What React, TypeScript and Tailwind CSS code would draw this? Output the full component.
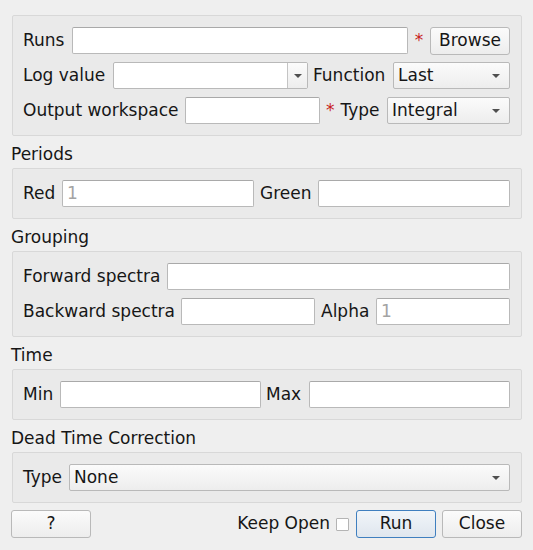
import { ReactNode } from 'react';

function Arrow() {
  return (
    <svg width="8" height="4" viewBox="0 0 8 4" className="shrink-0">
      <path d="M0 0h8L4 4z" fill="#4f4f4f" />
    </svg>
  );
}

function Star({ className = '' }: { className?: string }) {
  return <span className={`text-[#c81e1e] ${className}`}>*</span>;
}

function Label({ text, w, pl = 'pl-[1px]' }: { text: string; w: string; pl?: string }) {
  return <span className={`${w} ${pl} shrink-0 whitespace-nowrap`}>{text}</span>;
}

function Field({ w, placeholder }: { w: string; placeholder?: string }) {
  return (
    <div className={`${w} h-[27px] shrink-0 rounded-[2px] border border-[#b9b9b9] border-t-[#a9a9a9] bg-white px-[4px] leading-[25px] text-[#a3a3a3]`}>
      {placeholder}
    </div>
  );
}

function Combo({ w, value }: { w: string; value: string }) {
  return (
    <div className={`${w} flex h-[27px] shrink-0 items-center justify-between rounded-[2px] border border-[#b9b9b9] bg-linear-to-b from-[#fbfbfb] to-[#ededed] pl-[4px] pr-[9px]`}>
      <span>{value}</span>
      <Arrow />
    </div>
  );
}

function EditCombo({ w }: { w: string }) {
  return (
    <div className={`${w} flex h-[27px] shrink-0 overflow-hidden rounded-[2px] border border-[#b9b9b9] bg-white`}>
      <div className="flex-1" />
      <div className="flex w-[20px] items-center justify-center border-l border-[#c4c4c4] bg-linear-to-b from-[#fbfbfb] to-[#ededed]">
        <Arrow />
      </div>
    </div>
  );
}

function Button({ text, focus = false }: { text: string; focus?: boolean }) {
  const look = focus
    ? 'border-[#3f7fbf] from-[#f1f5f9] to-[#dfe6ee]'
    : 'border-[#b9b9b9] from-[#fbfbfb] to-[#ededed]';
  return (
    <div className={`flex h-[28px] w-[80px] shrink-0 items-center justify-center rounded-[3px] border bg-linear-to-b ${look}`}>
      {text}
    </div>
  );
}

function Box({ children }: { children: ReactNode }) {
  return (
    <div className="ml-[1px] flex flex-col gap-[8px] rounded-[2px] border border-[#d8d8d8] bg-[#eaeaea] py-[11px] pl-[9px] pr-[11px]">
      {children}
    </div>
  );
}

function Row({ children }: { children: ReactNode }) {
  return <div className="flex h-[27px] items-center">{children}</div>;
}

function Title({ text }: { text: string }) {
  return <div className="h-[32px] pt-[8px] leading-[20px]">{text}</div>;
}

export default function App() {
  return (
    <div className="flex h-[550px] w-[533px] flex-col bg-[#efefef] px-[11px] pt-[15px] font-['DejaVu_Sans',sans-serif] text-[17px] text-[#161616]">
      <Box>
        <Row>
          <Label text="Runs" w="w-[50px]" />
          <Field w="w-[336px]" />
          <div className="flex w-[22px] shrink-0 justify-center">
            <Star />
          </div>
          <Button text="Browse" />
        </Row>
        <Row>
          <Label text="Log value" w="w-[91px]" />
          <EditCombo w="w-[195px]" />
          <Label text="Function" w="w-[85px]" pl="pl-[5px]" />
          <Combo w="w-[117px]" value="Last" />
        </Row>
        <Row>
          <Label text="Output workspace" w="w-[163px]" />
          <Field w="w-[135px]" />
          <div className="flex w-[67px] shrink-0 items-center whitespace-nowrap pl-[6px]">
            <Star />
            <span className="ml-[6px]">Type</span>
          </div>
          <Combo w="w-[123px]" value="Integral" />
        </Row>
      </Box>

      <Title text="Periods" />
      <Box>
        <Row>
          <Label text="Red" w="w-[40px]" />
          <Field w="w-[192px]" placeholder="1" />
          <Label text="Green" w="w-[64px]" pl="pl-[6px]" />
          <Field w="w-[192px]" />
        </Row>
      </Box>

      <Title text="Grouping" />
      <Box>
        <Row>
          <Label text="Forward spectra" w="w-[145px]" />
          <Field w="w-[343px]" />
        </Row>
        <Row>
          <Label text="Backward spectra" w="w-[159px]" />
          <Field w="w-[134px]" />
          <Label text="Alpha" w="w-[61px]" pl="pl-[6px]" />
          <Field w="w-[134px]" placeholder="1" />
        </Row>
      </Box>

      <Title text="Time" />
      <Box>
        <Row>
          <Label text="Min" w="w-[38px]" />
          <Field w="w-[201px]" />
          <Label text="Max" w="w-[48px]" pl="pl-[5px]" />
          <Field w="w-[201px]" />
        </Row>
      </Box>

      <Title text="Dead Time Correction" />
      <Box>
        <Row>
          <Label text="Type" w="w-[47px]" />
          <Combo w="w-[441px]" value="None" />
        </Row>
      </Box>

      <div className="mt-[7px] flex items-center">
        <Button text="?" />
        <div className="flex-1" />
        <span className="whitespace-nowrap">Keep Open</span>
        <div className="ml-[6px] h-[13px] w-[13px] rounded-[1px] border border-[#b4b4b4] bg-white" />
        <div className="ml-[7px]">
          <Button text="Run" focus />
        </div>
        <div className="ml-[6px]">
          <Button text="Close" />
        </div>
      </div>
    </div>
  );
}
